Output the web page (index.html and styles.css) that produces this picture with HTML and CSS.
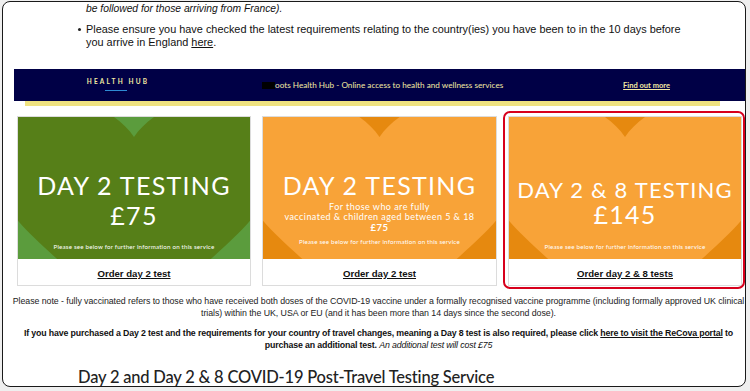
FILE: index.html
```html
<!DOCTYPE html>
<html lang="en">
<head>
  <meta charset="UTF-8" />
  <title>Day 2 and Day 2 &amp; 8 Testing</title>
  <link rel="stylesheet" href="styles.css">
</head>
<body>
  <div class="frame">
    <div class="intro">
      <p class="cut"><em>be followed for those arriving from France).</em></p>
      <ul>
        <li>Please ensure you have checked the latest requirements relating to the country(ies) you have been to in the 10 days before you arrive in England <a href="#">here</a>.</li>
      </ul>
    </div>

    <div class="hub">
      <div class="hub-brand">
        <span>HEALTH HUB</span>
      </div>
      <div class="hub-text"><span class="redact"></span>oots Health Hub - Online access to health and wellness services</div>
      <a class="hub-link" href="#">Find out more</a>
    </div>
    <div class="hub-strip"></div>

    <div class="cards">
      <div class="card">
        <div class="card-img green">
          <svg class="heart" viewBox="0 0 234 142" preserveAspectRatio="none">
            <rect width="234" height="142" class="bg" />
            <path class="fg" d="M117,20 C100,-5 60,-25 20,-15 C-8,-10 -25,40 -20,70 C-15,95 20,125 60,160 L117,200 L174,160 C214,125 249,95 254,70 C259,40 242,-10 214,-15 C174,-25 134,-5 117,20 Z" />
          </svg>
          <div class="card-copy one">
            <div class="big">DAY 2 TESTING</div>
            <div class="big">£75</div>
            <div class="tiny">Please see below for further information on this service</div>
          </div>
        </div>
        <div class="card-link"><a href="#">Order day 2 test</a></div>
      </div>

      <div class="card">
        <div class="card-img orange">
          <svg class="heart" viewBox="0 0 234 142" preserveAspectRatio="none">
            <rect width="234" height="142" class="bg" />
            <path class="fg" d="M117,20 C100,-5 60,-25 20,-15 C-8,-10 -25,40 -20,70 C-15,95 20,125 60,160 L117,200 L174,160 C214,125 249,95 254,70 C259,40 242,-10 214,-15 C174,-25 134,-5 117,20 Z" />
          </svg>
          <div class="card-copy two">
            <div class="big">DAY 2 TESTING</div>
            <div class="sub">For those who are fully<br>vaccinated &amp; children aged between 5 &amp; 18</div>
            <div class="sub price">£75</div>
            <div class="tiny">Please see below for further information on this service</div>
          </div>
        </div>
        <div class="card-link"><a href="#">Order day 2 test</a></div>
      </div>

      <div class="card picked">
        <div class="card-img orange">
          <svg class="heart" viewBox="0 0 234 142" preserveAspectRatio="none">
            <rect width="234" height="142" class="bg" />
            <path class="fg" d="M117,20 C100,-5 60,-25 20,-15 C-8,-10 -25,40 -20,70 C-15,95 20,125 60,160 L117,200 L174,160 C214,125 249,95 254,70 C259,40 242,-10 214,-15 C174,-25 134,-5 117,20 Z" />
          </svg>
          <div class="card-copy three">
            <div class="big mid">DAY 2 &amp; 8 TESTING</div>
            <div class="big cost">£145</div>
            <div class="tiny">Please see below for further information on this service</div>
          </div>
        </div>
        <div class="card-link"><a href="#">Order day 2 &amp; 8 tests</a></div>
      </div>
    </div>

    <p class="note">Please note - fully vaccinated refers to those who have received both doses of the COVID-19 vaccine under a formally recognised vaccine programme (including formally approved UK clinical trials) within the UK, USA or EU (and it has been more than 14 days since the second dose).</p>

    <p class="note strong">If you have purchased a Day 2 test and the requirements for your country of travel changes, meaning a Day 8 test is also required, please click <a href="#">here to visit the ReCova portal</a> to purchase an additional test. <em>An additional test will cost £75</em></p>

    <h2 class="title">Day 2 and Day 2 &amp; 8 COVID-19 Post-Travel Testing Service</h2>
  </div>
</body>
</html>
```

FILE: styles.css
```css
html {
  background: #efefef;
}

body {
  margin: 0;
  font-family: Arial, "Liberation Sans", sans-serif;
  color: #111;
}

a {
  color: inherit;
}

.frame {
  margin: 1px 4px 0 2px;
  height: 386px;
  box-sizing: border-box;
  border: 1.5px solid #1a1a1a;
  border-radius: 8px;
  background: #fff;
  overflow: hidden;
}

.intro {
  padding-left: 83px;
  font-size: 10.9px;
  line-height: 13px;
}

.intro p {
  margin: 0;
  font-size: 10.3px;
}

.intro ul {
  margin: 8px 0 0;
  padding-left: 0;
  list-style: none;
}

.intro li {
  position: relative;
  padding-right: 56px;
}

.intro li::before {
  content: "";
  position: absolute;
  left: -8px;
  top: 5px;
  width: 3px;
  height: 3px;
  border-radius: 50%;
  background: #222;
}

/* health hub banner */
.hub {
  margin: 20px 0 0 11px;
  height: 32px;
  background: #000046;
  display: flex;
  align-items: center;
  color: #f3e9a2;
  font-family: Lato, "Liberation Sans", sans-serif;
}

.hub-brand {
  width: 208px;
  text-align: center;
  font-size: 6.5px;
  font-weight: bold;
  letter-spacing: 2.2px;
  margin-top: -8px;
}

.hub-brand span {
  display: inline-block;
  position: relative;
}

.hub-brand span::after {
  content: "";
  position: absolute;
  left: 18px;
  top: 12px;
  width: 22px;
  height: 1px;
  background: #2e8bd4;
}

.hub-text {
  margin-left: 40px;
  font-size: 8.2px;
  display: flex;
  align-items: center;
}

.redact {
  display: inline-block;
  width: 13px;
  height: 7px;
  background: #000;
}

.hub-link {
  margin-left: auto;
  margin-right: 75px;
  font-size: 7.5px;
  font-weight: bold;
  color: #f3e9a2;
}

.hub-strip {
  margin: 0 25px 0 22px;
  height: 5px;
  background: #efe281;
}

/* cards */
.cards {
  display: grid;
  grid-template-columns: 234px 235px 234px;
  column-gap: 11px;
  margin: 10px 0 0 14px;
}

.card {
  border: 1px solid #dcdcdc;
  position: relative;
}

.card.picked::after {
  content: "";
  position: absolute;
  left: -6px;
  top: -6px;
  right: -4px;
  bottom: -4px;
  border: 2px solid #d7001c;
  border-radius: 7px;
}

.card-img {
  position: relative;
  height: 142px;
  overflow: hidden;
  color: #fff;
  font-family: Lato, "Liberation Sans", sans-serif;
}

.heart {
  position: absolute;
  left: 0;
  top: 0;
  width: 100%;
  height: 100%;
}

.green .bg { fill: #5b9c3d; }
.green .fg { fill: #567f18; }
.orange .bg { fill: #e6890f; }
.orange .fg { fill: #f8a338; }

.card-copy {
  position: relative;
  height: 100%;
  display: flex;
  flex-direction: column;
  align-items: center;
  box-sizing: border-box;
  text-align: center;
  white-space: nowrap;
}

.big {
  font-size: 25px;
  line-height: 30px;
  letter-spacing: 1.3px;
}

.tiny {
  margin-top: auto;
  margin-bottom: 9px;
  font-size: 6.2px;
  letter-spacing: 0.2px;
}

.card-copy.one {
  padding-top: 53px;
}

.card-copy.two {
  padding-top: 55px;
}

.card-copy.two .big {
  line-height: 27px;
}

.card-copy.three {
  padding-top: 61px;
}

.big.mid {
  font-size: 22px;
  line-height: 23px;
  letter-spacing: 1.2px;
}

.big.cost {
  font-size: 25px;
  line-height: 26px;
}

.sub {
  font-size: 9px;
  line-height: 10px;
  letter-spacing: 0.45px;
  margin-top: 3px;
}

.sub.price {
  font-weight: bold;
  font-size: 9.5px;
  margin-top: 1px;
}

.card-copy.two .tiny {
  margin-top: 5px;
}

.card-link {
  height: 26px;
  display: flex;
  align-items: center;
  justify-content: center;
  padding-top: 3px;
  box-sizing: border-box;
  font-size: 9.6px;
  font-weight: bold;
}

/* notes */
.note {
  margin: 9px 0 0 9px;
  font-size: 8.8px;
  line-height: 12px;
  letter-spacing: -0.05px;
  text-align: center;
  color: #222;
}

.note.strong {
  margin-top: 8px;
  font-weight: bold;
  letter-spacing: -0.15px;
  color: #111;
}

.note.strong em {
  font-weight: normal;
}

.title {
  margin: 16px 0 0 75px;
  font-family: Lato, "Liberation Sans", sans-serif;
  font-size: 16.5px;
  font-weight: 500;
  letter-spacing: -0.2px;
  color: #222;
}
```
